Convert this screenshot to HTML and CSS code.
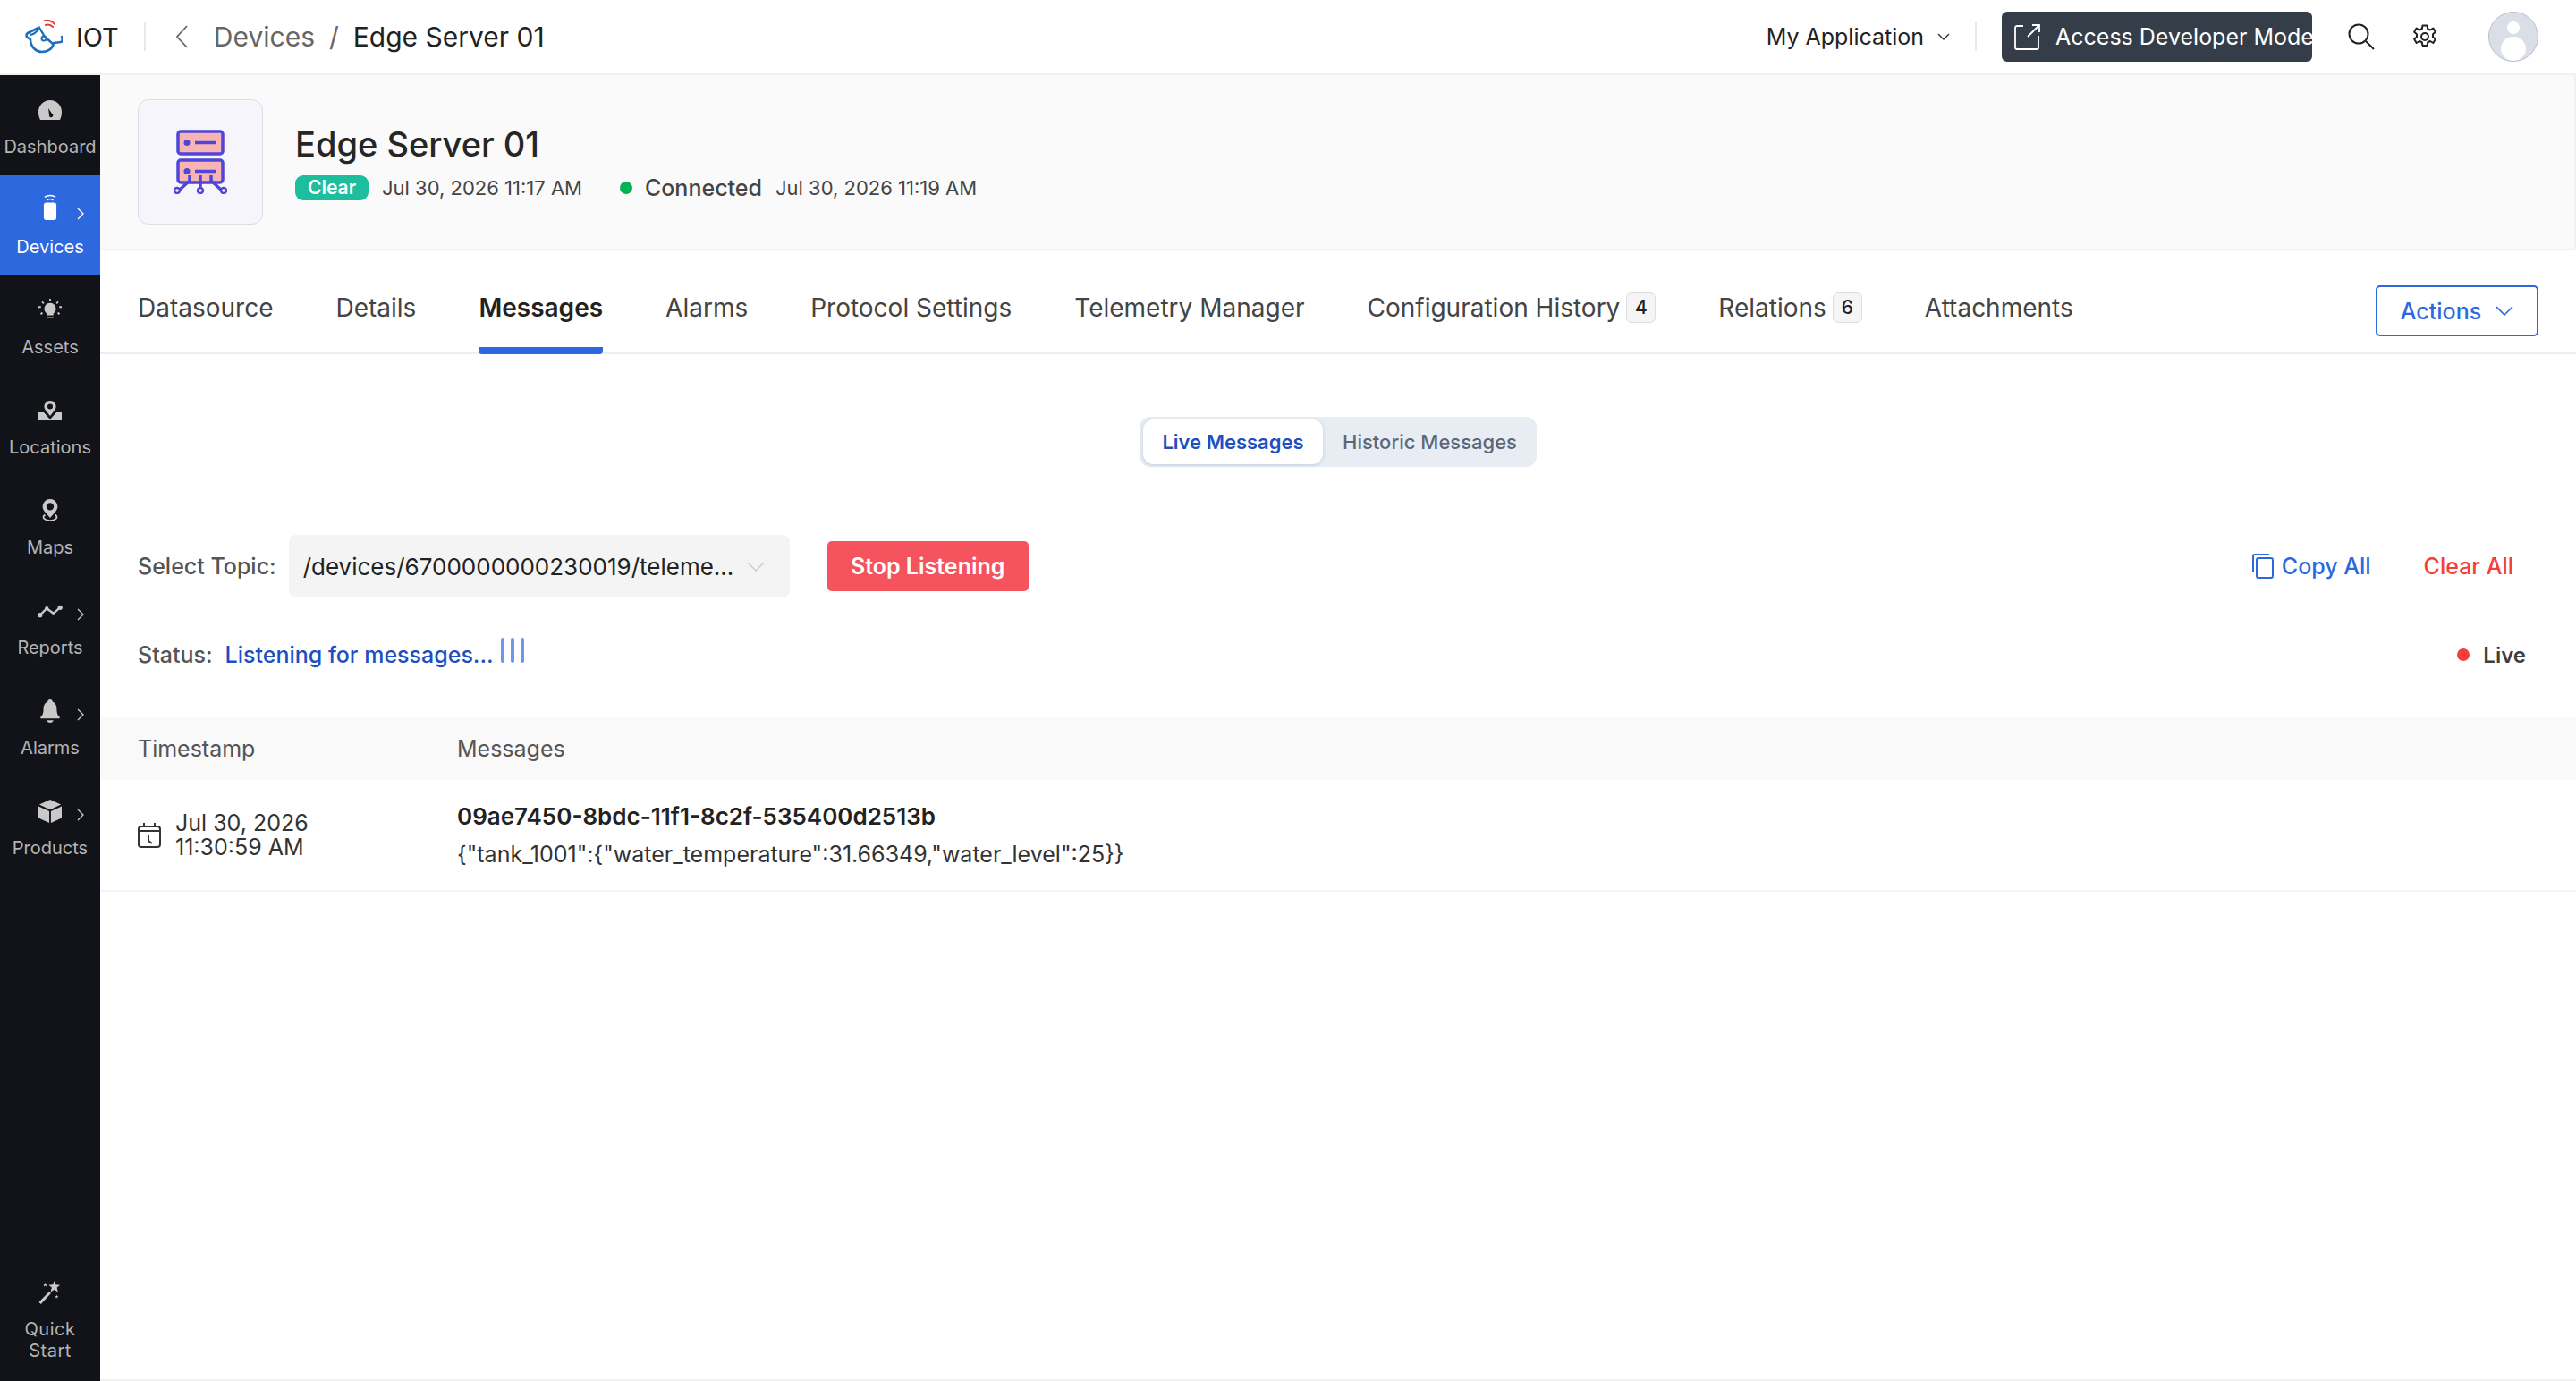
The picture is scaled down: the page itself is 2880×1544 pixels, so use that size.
FILE: index.html
```html
<!DOCTYPE html>
<html lang="en">
<head>
    <meta charset="UTF-8">
    <title>Edge Server 01</title>
    <link rel="stylesheet" href="styles.css">
</head>
<body>
    <header class="topbar">
        <svg class="logo" viewBox="0 0 42 38" fill="none">
            <path d="M23 6c3-1 6 0 8 2" stroke="#e8392f" stroke-width="2" stroke-linecap="round"/>
            <path d="M22 1c4-1 9 1 11 4" stroke="#e8392f" stroke-width="2" stroke-linecap="round"/>
            <path d="M15 9 3 15c-2 1-2 4 0 5l3 2c0 8 6 14 13 14 7 0 12-4 13-10l8-1c2 0 2-3 1-7" stroke="#1f6fb8" stroke-width="2.6" stroke-linejoin="round"/>
            <path d="M5 17c5 0 8-3 11-8l6 10 9 8" stroke="#1f6fb8" stroke-width="2.4"/>
            <circle cx="21" cy="21" r="2.5" stroke="#1f6fb8" stroke-width="2"/>
        </svg>
        <span class="brand">IOT</span>
        <span class="sep"></span>
        <svg class="back" viewBox="0 0 16 28" fill="none"><path d="M14 2 3 14l11 12" stroke="#666" stroke-width="1.8"/></svg>
        <span class="crumb">Devices</span>
        <span class="crumb crumb-slash">/</span>
        <span class="crumb-current">Edge Server 01</span>

        <div class="topbar-right">
            <span class="app-name">My Application</span>
            <svg class="app-chevron" viewBox="0 0 14 8" fill="none"><path d="m1 1 6 6 6-6" stroke="#333" stroke-width="1.4"/></svg>
            <span class="sep sep-right"></span>
            <button class="dev-button">
                <svg class="dev-icon" viewBox="0 0 30 30" fill="none">
                    <path d="M10 3H3a2 2 0 0 0-2 2v22a2 2 0 0 0 2 2h22a2 2 0 0 0 2-2V14" stroke="#fff" stroke-width="1.8"/>
                    <path d="M15 15 28 2m-8 0h8v8" stroke="#fff" stroke-width="1.8"/>
                </svg>
                Access Developer Mode
            </button>
            <svg class="top-search" viewBox="0 0 30 30" fill="none"><circle cx="12" cy="12" r="10.5" stroke="#222" stroke-width="2"/><path d="m20 20 9 9" stroke="#222" stroke-width="2"/></svg>
            <svg class="top-gear" viewBox="0 0 24 24" fill="none" stroke="#222" stroke-width="1.6" stroke-linejoin="round">
                <circle cx="12" cy="12" r="3.2"/>
                <path d="M10 2h4l.6 3 2.2 1 2.7-1.6 2 3.4-2.3 2v2.4l2.3 2-2 3.4-2.7-1.6-2.2 1-.6 3h-4l-.6-3-2.2-1-2.7 1.6-2-3.4 2.3-2v-2.4l-2.3-2 2-3.4L7.200 6l2.200-1z"/>
            </svg>
            <div class="avatar"><span class="avatar-head"></span><span class="avatar-body"></span></div>
        </div>
    </header>

    <div class="app">
        <nav class="sidebar">
            <a class="nav-item">
                <svg class="nav-icon" viewBox="0 0 28 24"><path fill-rule="evenodd" fill="#c9c9c9" d="M14 1C6.800 1 1 6.800 1 14c0 3 .5 6 2 9h22c1.500-3 2-6 2-9 0-7.200-5.800-13-13-13Zm-2 9 4 6a2.200 2.200 0 1 1-3 1.500Z"/></svg>
                <span>Dashboard</span>
            </a>
            <a class="nav-item nav-active">
                <svg class="nav-icon nav-icon-devices" viewBox="0 0 20 34" fill="none">
                    <path d="M3 5c4-3 10-3 14 0M6 9c2.500-2 5.500-2 8 0" stroke="#fff" stroke-width="1.600"/>
                    <rect x="2" y="12" width="16" height="22" rx="3" fill="#fff"/>
                </svg>
                <span>Devices</span>
                <svg class="nav-chevron" viewBox="0 0 8 14" fill="none"><path d="m1 1 6 6-6 6" stroke="#fff" stroke-width="1.300"/></svg>
            </a>
            <a class="nav-item">
                <svg class="nav-icon" viewBox="0 0 28 28"><path fill="#c9c9c9" d="M14 5a7 7 0 0 0-4 12.700V20h8v-2.300A7 7 0 0 0 14 5Zm-4 17h8v1.500h-8zM13 0h2v3h-2zM3 11H0v-2h3zm25 0h-3V9h3zM5 3l2 2-1.400 1.400-2-2zm18 0 1.400 1.400-2 2L21 5zM4 16l1.400 1.400-2 2L2 18zm20 0 2 2-1.400 1.400-2-2z"/></svg>
                <span>Assets</span>
            </a>
            <a class="nav-item">
                <svg class="nav-icon" viewBox="0 0 28 24"><path fill="#c9c9c9" fill-rule="evenodd" d="M14 1a6.500 6.500 0 0 0-5.500 10L14 18l5.500-7A6.500 6.500 0 0 0 14 1Zm0 3.500a3 3 0 1 1 0 6 3 3 0 0 1 0-6ZM1 14h6l7 8 7-8h6v9H1z"/></svg>
                <span>Locations</span>
            </a>
            <a class="nav-item">
                <svg class="nav-icon" viewBox="0 0 24 28"><path fill="#c9c9c9" fill-rule="evenodd" d="M12 0a9 9 0 0 0-7 14.600l7 8 7-8A9 9 0 0 0 12 0Zm0 4.500a4.500 4.500 0 1 1 0 9 4.500 4.500 0 0 1 0-9Z"/><path d="M6 19c-5 3 0 7 6 7s11-4 6-7" fill="none" stroke="#c9c9c9" stroke-width="2"/></svg>
                <span>Maps</span>
            </a>
            <a class="nav-item">
                <svg class="nav-icon" viewBox="0 0 30 16" fill="none"><path d="M3 13 11 5l8 6 9-8" stroke="#c9c9c9" stroke-width="2.500"/><circle cx="3" cy="13" r="2.800" fill="#c9c9c9"/><circle cx="11" cy="5" r="2.300" fill="#c9c9c9"/><circle cx="19" cy="11" r="2.300" fill="#c9c9c9"/><circle cx="27" cy="4" r="2.800" fill="#c9c9c9"/></svg>
                <span>Reports</span>
                <svg class="nav-chevron" viewBox="0 0 8 14" fill="none"><path d="m1 1 6 6-6 6" stroke="#c9c9c9" stroke-width="1.300"/></svg>
            </a>
            <a class="nav-item">
                <svg class="nav-icon" viewBox="0 0 24 28"><path fill="#c9c9c9" d="M12 0c-2 0-3 1.300-3 3C5 4.500 4 8 4 12c0 4-1 7-3.500 9v2h23v-2C21 19 20 16 20 12c0-4-1-7.500-5-9 0-1.700-1-3-3-3ZM8 25h8c-.5 2-2 3-4 3s-3.500-1-4-3Z"/></svg>
                <span>Alarms</span>
                <svg class="nav-chevron" viewBox="0 0 8 14" fill="none"><path d="m1 1 6 6-6 6" stroke="#c9c9c9" stroke-width="1.300"/></svg>
            </a>
            <a class="nav-item">
                <svg class="nav-icon" viewBox="0 0 28 28"><path fill="#c9c9c9" d="M14 0 1 6l13 6 13-6zM0 8l13 6v14L0 22zm28 0-13 6v14l13-6z"/></svg>
                <span>Products</span>
                <svg class="nav-chevron" viewBox="0 0 8 14" fill="none"><path d="m1 1 6 6-6 6" stroke="#c9c9c9" stroke-width="1.300"/></svg>
            </a>
            <a class="nav-item nav-quick">
                <svg class="nav-icon" viewBox="0 0 28 28"><path fill="#c9c9c9" d="m19 0 1.600 4.500 5.400.5-3.800 3.200 1.300 5.300-4.500-2.800-4.500 2.800L16 8.200 12.200 5l5-.5zM13 13l2 2L3 28l-2.500-2.500zM8 2l.7 1.700L10.500 4 9.200 5.200l.4 1.800L8 6l-1.600 1 .4-1.800L5.500 4l1.800-.3zm14 15 .5 1.300 1.500.2-1.100 1 .3 1.500-1.200-.8-1.200.8.300-1.500-1.100-1 1.500-.2z"/></svg>
                <span>Quick<br>Start</span>
            </a>
        </nav>

        <main class="content">
            <section class="hero">
                <div class="hero-icon">
                    <svg viewBox="0 0 60 72" width="60" height="72" fill="none">
                        <rect x="5" y="2" width="50" height="25" rx="3" fill="#f8b4b4" stroke="#4f46d8" stroke-width="3.500"/>
                        <rect x="5" y="34" width="50" height="25" rx="3" fill="#f8b4b4" stroke="#4f46d8" stroke-width="3.500"/>
                        <circle cx="15" cy="14.500" r="3.500" fill="#4f46d8"/>
                        <circle cx="15" cy="46.500" r="3.500" fill="#4f46d8"/>
                        <path d="M24 14.500h23M24 46.500h23" stroke="#4f46d8" stroke-width="3.500"/>
                        <path d="M18 59v6L7 75M30 59v13M42 59v6l11 10" stroke="#4f46d8" stroke-width="3.500" transform="translate(0 -8)"/>
                        <circle cx="4" cy="68" r="3" stroke="#4f46d8" stroke-width="2.500"/>
                        <circle cx="30" cy="68" r="3" stroke="#4f46d8" stroke-width="2.500"/>
                        <circle cx="56" cy="68" r="3" stroke="#4f46d8" stroke-width="2.500"/>
                    </svg>
                </div>
                <div class="hero-info">
                    <h1 class="hero-title">Edge Server 01</h1>
                    <div class="hero-meta">
                        <span class="badge-clear">Clear</span>
                        <span class="meta-date">Jul 30, 2026 11:17 AM</span>
                        <span class="dot-green"></span>
                        <span class="meta-conn">Connected</span>
                        <span class="meta-date">Jul 30, 2026 11:19 AM</span>
                    </div>
                </div>
            </section>

            <section class="tabs">
                <a class="tab">Datasource</a>
                <a class="tab">Details</a>
                <a class="tab tab-active">Messages</a>
                <a class="tab">Alarms</a>
                <a class="tab">Protocol Settings</a>
                <a class="tab">Telemetry Manager</a>
                <a class="tab">Configuration History <span class="count">4</span></a>
                <a class="tab">Relations <span class="count">6</span></a>
                <a class="tab">Attachments</a>
                <button class="actions">Actions
                    <svg viewBox="0 0 20 11" width="20" height="11" fill="none"><path d="m1 1 9 9 9-9" stroke="#2d68df" stroke-width="1.600"/></svg>
                </button>
            </section>

            <div class="switch-wrap">
                <div class="switch">
                    <span class="switch-on">Live Messages</span>
                    <span class="switch-off">Historic Messages</span>
                </div>
            </div>

            <div class="topic-row">
                <span class="field-label">Select Topic:</span>
                <div class="select">
                    <span>/devices/6700000000230019/teleme...</span>
                    <svg viewBox="0 0 20 11" width="20" height="11" fill="none"><path d="m1 1 9 9 9-9" stroke="#ccc" stroke-width="1.500"/></svg>
                </div>
                <button class="stop">Stop Listening</button>
                <a class="copy-all">
                    <svg viewBox="0 0 24 28" width="24" height="28" fill="none" stroke="#2d68df" stroke-width="2"><path d="M19 1H3a2 2 0 0 0-2 2v18"/><rect x="5" y="5" width="18" height="22" rx="2"/></svg>
                    Copy All
                </a>
                <a class="clear-all">Clear All</a>
            </div>

            <div class="status-row">
                <span class="field-label">Status:</span>
                <span class="listening">Listening for messages...</span>
                <span class="bars"><i></i><i></i><i></i></span>
                <span class="live"><span class="dot-red"></span>Live</span>
            </div>

            <div class="table-head">
                <span class="col-time">Timestamp</span>
                <span>Messages</span>
            </div>
            <div class="table-row">
                <div class="col-time time-cell">
                    <svg viewBox="0 0 26 28" width="26" height="28" fill="none" stroke="#333" stroke-width="2">
                        <rect x="1" y="4" width="24" height="23" rx="3"/>
                        <path d="M7 0v4M19 0v4M1 9h24M12 13v7l4 3"/>
                    </svg>
                    <span>Jul 30, 2026<br>11:30:59 AM</span>
                </div>
                <div class="msg-cell">
                    <div class="msg-id">09ae7450-8bdc-11f1-8c2f-535400d2513b</div>
                    <div class="msg-body">{"tank_1001":{"water_temperature":31.66349,"water_level":25}}</div>
                </div>
            </div>
        </main>
    </div>
</body>
</html>
```

FILE: styles.css
```css
* {
    box-sizing: border-box;
}

body {
    margin: 0;
    height: 1544px;
    display: flex;
    flex-direction: column;
    font-family: Inter, "Noto Sans", sans-serif;
    color: #333;
    background-color: #fff;
    overflow: hidden;
}

.topbar {
    height: 84px;
    flex: none;
    display: flex;
    align-items: center;
    padding: 0 42px 0 28px;
    border-bottom: 2px solid #f1f1f1;
}

.logo {
    width: 42px;
    height: 38px;
}

.brand {
    font-size: 29px;
    color: #222;
    margin-left: 15px;
}

.sep {
    width: 2px;
    height: 32px;
    background-color: #e8e8e8;
    margin-left: 28px;
}

.back {
    width: 16px;
    height: 28px;
    margin: 0 28px 0 32px;
}

.crumb {
    font-size: 30px;
    color: #666;
}

.crumb-slash {
    margin: 0 16px;
}

.crumb-current {
    font-size: 30px;
    color: #222;
}

.topbar-right {
    margin-left: auto;
    display: flex;
    align-items: center;
}

.app-name {
    font-size: 25px;
    color: #222;
}

.app-chevron {
    width: 14px;
    height: 8px;
    margin-left: 15px;
}

.sep-right {
    margin-left: 28px;
}

.dev-button {
    height: 56px;
    width: 347px;
    margin-left: 28px;
    display: flex;
    align-items: center;
    gap: 16px;
    padding: 0 14px;
    border: none;
    border-radius: 6px;
    background-color: #343d48;
    color: #fff;
    font-family: inherit;
    font-size: 25px;
    white-space: nowrap;
}

.dev-icon {
    width: 30px;
    height: 30px;
    flex: none;
}

.top-search {
    width: 30px;
    height: 30px;
    margin-left: 40px;
}

.top-gear {
    width: 30px;
    height: 30px;
    margin-left: 41px;
}

.avatar {
    width: 56px;
    height: 56px;
    margin-left: 56px;
    border-radius: 50%;
    border: 1px solid #b9bec8;
    background-color: #dadee7;
    display: flex;
    flex-direction: column;
    align-items: center;
    overflow: hidden;
    padding-top: 10px;
    gap: 3px;
}

.avatar-head {
    width: 14px;
    height: 14px;
    border-radius: 50%;
    background-color: #fff;
}

.avatar-body {
    width: 28px;
    height: 28px;
    border-radius: 50%;
    background-color: #fff;
}

.app {
    flex: 1;
    display: flex;
    min-height: 0;
}

.sidebar {
    width: 112px;
    flex: none;
    display: flex;
    flex-direction: column;
    background-color: #111319;
}

.nav-item {
    position: relative;
    height: 112px;
    flex: none;
    display: flex;
    flex-direction: column;
    align-items: center;
    padding-top: 26px;
    font-size: 20px;
    line-height: 24px;
    color: #b4b4b4;
    text-align: center;
}

.nav-icon {
    width: 28px;
    height: 26px;
    margin-bottom: 16px;
}

.nav-icon-devices {
    height: 30px;
    margin-top: -6px;
    margin-bottom: 18px;
}

.nav-active {
    background-color: #2d68df;
    color: #fff;
}

.nav-chevron {
    position: absolute;
    top: 36px;
    left: 86px;
    width: 8px;
    height: 14px;
}

.nav-quick {
    margin-top: auto;
    height: 138px;
    letter-spacing: 0.5px;
}

.content {
    flex: 1;
    min-width: 0;
    display: flex;
    flex-direction: column;
    border-bottom: 2px solid #f1f1f1;
}

.hero {
    height: 196px;
    flex: none;
    display: flex;
    align-items: center;
    gap: 36px;
    padding-left: 42px;
    background-color: #fafafa;
    border-bottom: 2px solid #f1f1f1;
    border-right: 2px solid #f1f1f1;
}

.hero-icon {
    width: 140px;
    height: 140px;
    border: 1.5px solid #dcdce4;
    border-radius: 12px;
    background-color: #f5f5fb;
    display: flex;
    align-items: center;
    justify-content: center;
}

.hero-title {
    margin: 0 0 10px;
    font-size: 38px;
    line-height: 48px;
    font-weight: 500;
    color: #262626;
}

.hero-meta {
    display: flex;
    align-items: center;
    font-size: 22px;
}

.badge-clear {
    padding: 0 14px;
    height: 28px;
    line-height: 28px;
    border-radius: 9px;
    background-color: #1dbd9d;
    color: #fff;
    font-weight: 600;
    font-size: 21px;
}

.meta-date {
    margin-left: 15px;
    color: #444;
}

.dot-green {
    width: 14px;
    height: 14px;
    margin-left: 42px;
    border-radius: 50%;
    background-color: #05b155;
}

.meta-conn {
    margin-left: 14px;
    font-size: 25px;
    font-weight: 500;
    color: #444;
}

.tabs {
    height: 116px;
    flex: none;
    display: flex;
    align-items: stretch;
    gap: 70px;
    padding: 0 42px;
    border-bottom: 2px solid #e9edf5;
}

.tab {
    display: flex;
    align-items: center;
    gap: 7px;
    padding-top: 20px;
    font-size: 28px;
    color: #444;
    margin-bottom: -2px;
    border-bottom: 8px solid transparent;
    white-space: nowrap;
}

.tab-active {
    font-weight: 600;
    color: #222;
    border-bottom-color: #2d68df;
    border-radius: 0 0 4px 4px;
}

.count {
    width: 33px;
    height: 34px;
    line-height: 32px;
    text-align: center;
    font-size: 21px;
    font-weight: 500;
    color: #222;
    border: 1px solid #ddd;
    border-radius: 6px;
    background-color: #f5f5f5;
}

.actions {
    margin: 39px 0 auto auto;
    width: 182px;
    height: 57px;
    display: flex;
    align-items: center;
    justify-content: center;
    gap: 16px;
    border: 2px solid #2d68df;
    border-radius: 5px;
    background-color: #fff;
    color: #2d68df;
    font-family: inherit;
    font-size: 25px;
    font-weight: 500;
}

.switch-wrap {
    display: flex;
    justify-content: center;
    padding-top: 70px;
}

.switch {
    width: 444px;
    height: 56px;
    padding: 3px 0 3px 4px;
    display: flex;
    align-items: center;
    border-radius: 12px;
    background-color: #e8edf4;
    font-size: 22px;
    font-weight: 500;
}

.switch-on {
    width: 201px;
    height: 50px;
    line-height: 50px;
    text-align: center;
    border-radius: 12px;
    background-color: #fff;
    color: #1e4fc0;
    font-weight: 600;
    box-shadow: 0 1px 4px rgba(60, 80, 120, 0.2);
}

.switch-off {
    flex: 1;
    text-align: center;
    color: #5c6778;
}

.topic-row {
    display: flex;
    align-items: center;
    margin-top: 76px;
    padding: 0 70px 0 42px;
}

.field-label {
    font-size: 25px;
    font-weight: 500;
    color: #555;
}

.select {
    width: 560px;
    height: 70px;
    margin-left: 14px;
    padding: 0 28px 0 16px;
    display: flex;
    align-items: center;
    justify-content: space-between;
    border-radius: 8px;
    background-color: #f4f4f4;
    font-size: 26px;
    color: #222;
}

.stop {
    width: 225px;
    height: 56px;
    margin-left: 42px;
    border: none;
    border-radius: 5px;
    background-color: #f5535e;
    color: #fff;
    font-family: inherit;
    font-size: 25px;
    font-weight: 600;
}

.copy-all {
    margin-left: auto;
    display: flex;
    align-items: center;
    gap: 9px;
    font-size: 25px;
    font-weight: 500;
    color: #2d68df;
}

.clear-all {
    margin-left: 59px;
    font-size: 25px;
    font-weight: 500;
    color: #f63f37;
}

.status-row {
    display: flex;
    align-items: center;
    height: 50px;
    margin-top: 39px;
    padding: 0 56px 0 42px;
}

.listening {
    margin-left: 14px;
    font-size: 25px;
    font-weight: 500;
    color: #1e4fc0;
}

.bars {
    display: flex;
    gap: 7px;
    margin: -10px 0 0 8px;
    height: 28px;
}

.bars i {
    width: 4px;
    height: 28px;
    border-radius: 2px;
    background-color: #6d97ea;
}

.live {
    margin-left: auto;
    display: flex;
    align-items: center;
    gap: 15px;
    font-size: 24px;
    font-weight: 600;
    color: #3e3e3e;
}

.dot-red {
    width: 14px;
    height: 14px;
    border-radius: 50%;
    background-color: #f63f37;
}

.table-head {
    height: 70px;
    margin-top: 45px;
    padding-left: 42px;
    display: flex;
    align-items: center;
    background-color: #f9f9f9;
    font-size: 25px;
    color: #555;
}

.col-time {
    width: 357px;
    flex: none;
}

.table-row {
    height: 125px;
    padding-left: 42px;
    display: flex;
    align-items: center;
    border-bottom: 2px solid #f1f3f6;
    font-size: 25px;
    color: #333;
}

.time-cell {
    display: flex;
    align-items: center;
    gap: 16px;
    line-height: 27px;
}

.msg-id {
    font-weight: 600;
    font-size: 26px;
    color: #222;
    margin-bottom: 12px;
}

.msg-body {
    font-size: 25px;
}
```
